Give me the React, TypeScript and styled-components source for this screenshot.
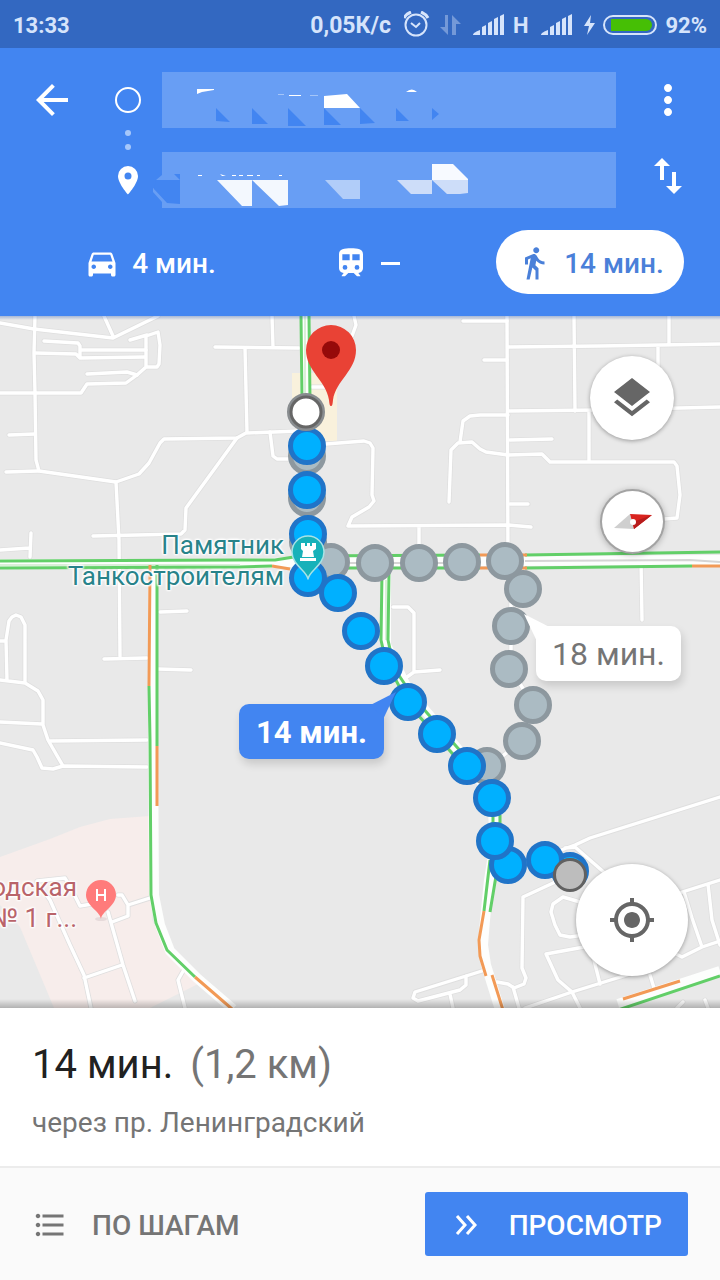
import React from "react";
import styled, { createGlobalStyle } from "styled-components";
import {
  MdArrowBack,
  MdDirectionsCar,
  MdDirectionsWalk,
  MdFormatListBulleted,
  MdImportExport,
  MdLayers,
  MdMoreVert,
  MdMyLocation,
} from "react-icons/md";

const color = {
  status: "#3368c1",
  statusText: "#d6e4fb",
  brand: "#4285f1",
  field: "#689ef4",
  land: "#e9e9e9",
  ink: "#212121",
  muted: "#757575",
};

const GlobalStyle = createGlobalStyle`
  * { box-sizing: border-box; }
  body { margin: 0; background: #fff; font-family: Roboto, "Noto Sans", sans-serif; }
  button, input { font: inherit; border: 0; margin: 0; padding: 0; background: none; color: inherit; }
  button { cursor: pointer; }
  svg { display: block; flex: none; }
`;

const Screen = styled.div`
  display: flex;
  flex-direction: column;
  min-height: 100vh;
  overflow: hidden;
`;

/* Status bar */
const StatusBar = styled.div`
  display: flex;
  align-items: center;
  justify-content: space-between;
  height: 48px;
  padding: 2px 13px 0;
  background: ${color.status};
  color: ${color.statusText};
  font-size: 22px;
  font-weight: 700;
`;

const StatusGroup = styled.div`
  display: flex;
  align-items: center;
  gap: 8px;
`;

const Speed = styled.span`
  font-size: 23px;
  margin-right: 5px;
`;

const Network = styled.span`
  padding-right: 5px;
`;

/* Directions header */
const Header = styled.header`
  padding: 24px 0 22px;
  background: ${color.brand};
  color: #fff;
`;

const Directions = styled.div`
  display: grid;
  grid-template-columns: 104px 58px 1fr 104px;
  grid-template-rows: 56px 56px;
  row-gap: 24px;
`;

const IconButton = styled.button<{ $column: number; $row: number }>`
  grid-column: ${(p) => p.$column};
  grid-row: ${(p) => p.$row};
  display: flex;
  align-items: center;
  justify-content: center;
`;

const SwapButton = styled(IconButton)`
  padding-bottom: 8px;
`;

const Rail = styled.div`
  grid-column: 2;
  grid-row: 1 / span 2;
`;

const Field = styled.div<{ $row: number }>`
  grid-column: 3;
  grid-row: ${(p) => p.$row};
  position: relative;
  background: ${color.field};
`;

const FieldInput = styled.input`
  width: 100%;
  height: 100%;
  padding: 0 20px;
  outline: none;
`;

const FieldArt = styled.svg`
  position: absolute;
  inset: 0;
  overflow: visible;
  pointer-events: none;
`;

const Modes = styled.nav`
  display: flex;
  gap: 28px;
  margin-top: 22px;
  padding: 0 36px 0 56px;
`;

const Mode = styled.button<{ $active?: boolean }>`
  display: flex;
  align-items: center;
  justify-content: center;
  gap: 12px;
  width: 188px;
  height: 64px;
  padding-top: 2px;
  margin-left: ${(p) => (p.$active ? "auto" : "0")};
  border-radius: 32px;
  font-size: 28px;
  font-weight: 500;
  background: ${(p) => (p.$active ? "#fff" : "transparent")};
  color: ${(p) => (p.$active ? "#4a80d9" : "#fff")};
`;

const Dash = styled.span`
  width: 19px;
  height: 3px;
  background: currentColor;
`;

/* Map */
const MapPanel = styled.main`
  position: relative;
  flex: 1;
  min-height: 692px;
  overflow: hidden;
  background: ${color.land};
  &::after {
    content: "";
    position: absolute;
    inset: 0;
    pointer-events: none;
    background:
      linear-gradient(rgba(40, 90, 180, 0.35), transparent) top / 100% 4px no-repeat,
      linear-gradient(transparent, rgba(0, 0, 0, 0.24)) bottom / 100% 9px no-repeat;
  }
`;

const MapCanvas = styled.svg`
  position: absolute;
  inset: 0;
  width: 100%;
  height: 100%;
`;

const MapLabel = styled.div<{ $x: number; $y: number; $w: number; $tone: string }>`
  position: absolute;
  left: ${(p) => p.$x}px;
  top: ${(p) => p.$y}px;
  width: ${(p) => p.$w}px;
  display: flex;
  flex-direction: column;
  align-items: flex-end;
  font-size: 26px;
  line-height: 31px;
  white-space: nowrap;
  color: ${(p) => p.$tone};
  text-shadow: 0 0 2px #fff, 1px 1px 2px #fff, -1px -1px 2px #fff, 1px -1px 2px #fff, -1px 1px 2px #fff;
`;

const Callout = styled.button<{ $x: number; $y: number; $active?: boolean }>`
  position: absolute;
  left: ${(p) => p.$x}px;
  top: ${(p) => p.$y}px;
  width: 145px;
  height: 55px;
  padding-top: 1px;
  border-radius: 10px;
  font-size: ${(p) => (p.$active ? 31 : 32)}px;
  font-weight: ${(p) => (p.$active ? 700 : 400)};
  background: ${(p) => (p.$active ? color.brand : "#fff")};
  color: ${(p) => (p.$active ? "#fff" : color.muted)};
  box-shadow: 2px 5px 8px rgba(0, 0, 0, 0.14);
  &::before {
    content: "";
    position: absolute;
    top: -12px;
    width: 26px;
    height: 30px;
    ${(p) => (p.$active ? "right: -12px;" : "left: -12px;")}
    background: inherit;
    clip-path: ${(p) =>
      p.$active ? "polygon(100% 0, 0 44%, 54% 84%)" : "polygon(0 0, 100% 44%, 46% 84%)"};
  }
`;

const MapButton = styled.button<{ $size: number }>`
  position: absolute;
  display: flex;
  align-items: center;
  justify-content: center;
  width: ${(p) => p.$size}px;
  height: ${(p) => p.$size}px;
  border-radius: 50%;
  background: #fff;
  color: #666;
  box-shadow: 0 1px 4px rgba(0, 0, 0, 0.35);
`;

const LayersButton = styled(MapButton)`
  top: 40px;
  right: 46px;
`;

const CompassButton = styled(MapButton)`
  top: 175px;
  right: 57px;
  box-shadow: 0 0 0 2px #a3a3a3, 0 1px 6px 2px rgba(0, 0, 0, 0.25);
`;

const LocateButton = styled(MapButton)`
  right: 32px;
  bottom: 32px;
`;

/* Bottom sheet */
const Summary = styled.section`
  padding: 32px 32px 25px;
  border-bottom: 2px solid #ececec;
`;

const Headline = styled.h1`
  display: flex;
  gap: 17px;
  margin: 0;
  font-size: 40px;
  line-height: 50px;
  font-weight: 400;
  color: ${color.ink};
`;

const Distance = styled.span`
  color: ${color.muted};
`;

const Via = styled.p`
  margin: 15px 0 0;
  font-size: 28px;
  line-height: 36px;
  color: ${color.muted};
`;

const Actions = styled.footer`
  display: flex;
  align-items: center;
  justify-content: space-between;
  height: 112px;
  padding: 0 32px;
  background: #fafafa;
`;

const Action = styled.button`
  display: flex;
  align-items: center;
  gap: 24px;
  height: 64px;
  padding-top: 2px;
  font-size: 28px;
  font-weight: 500;
  color: ${color.muted};
`;

const PrimaryAction = styled(Action)`
  gap: 28px;
  padding: 2px 26px 0;
  border-radius: 3px;
  background: ${color.brand};
  color: #fff;
`;

const Signal = () => (
  <svg width="32" height="22" viewBox="0 0 32 22" fill="currentColor" aria-hidden="true">
    <path d="M0 21c0-2 4-4 7-5v5zM9 13l4-2v10H9zM15 9l4-2v14h-4zM21 5l4-2v18h-4zM27 2l4-2v21h-4z" />
  </svg>
);

const minorRoads = [
  "M0 323 34 329 113 338 158 316M104 316 113 336",
  "M35 316 34 353 35 393 36 460 39 471 116 482 139 474 149 463 160 443 164 439 237 438 246 433 300 431",
  "M0 393H81L87 384 126 383 137 375 146 367 146 351 146 336 158 332 160 345 159 364 157 367H146M130 340 147 335",
  "M44 341 78 343 80 346V357M35 353 76 354 80 358 145 357M80 350H146M87 374 127 372 137 375",
  "M215 347 299 348M9 435 35 434M6 472 38 471M237 438 186 508 185 530 181 534 93 536",
  "M116 482 119 540 120 656M31 533 30 557M0 550 29 548M104 659 147 658M160 612 187 611M158 669 191 670",
  "M272 316 273 347M245 348 247 432M270 432 273 456 277 459H300M354 316 356 325 352 336M312 387H326",
  "M326 444 364 441 370 443 373 448 372 495 374 501 369 507 352 517 348 526 508 525 531 527M419 526V560",
  "M463 321H507M449 502 451 450 458 443 472 442 480 449 486 452 508 455 542 454 550 462H674L677 466 680 495 677 518 664 519",
  "M460 442 463 421 470 416 480 415H508M507 316 508 560M507 347 600 346 720 344M574 316 575 411M669 316V343M658 347V372",
  "M484 360H507M508 411 600 410 720 407M589 411V461M510 440 552 439M510 504H528",
  "M0 641H6M7 680 6 640 9 621 12 617 16 615 21 617 25 625V683M0 680 25 683 38 691 43 700V725L48 740 63 766M0 722 42 724",
  "M0 743 33 750 37 757 42 768 53 769 63 766 147 767M50 741 147 740",
  "M641 560 642 620M393 607H408L414 613V672L400 682M414 672 440 670M511 600V669L533 705 522 741 487 768",
  "M545 856 575 845 590 838 720 797M565 848 575 847 606 874M560 880 551 884 523 897 522 968 526 978 524 984 514 988 508 984 497 982M513 987 519 1008",
  "M482 971 415 992 413 998 418 1001 460 990 466 985V976M450 994 453 1008",
  "M580 902 563 897 553 904 551 912 555 925 560 935 570 937 584 935M584 947 546 954 558 980 572 992 525 1008M572 992 580 1008M572 992 630 974M594 960 600 984",
  "M650 975 654 988M676 894 720 880M708 884 712 920 720 945M684 892 692 918 702 947 682 957 674 953M702 947 720 941M677 1008 683 1002M705 1000 708 1008",
  "M37 881 65 878 72 890 80 906 92 904M37 882 50 900 70 945 84 975 91 1008M84 978 122 965M108 912 123 965 135 1001M112 922 128 916V905L122 895H118M128 905 150 898M186 966 178 980 185 1008",
];

const majorRoads = [
  "M0 564H240L300 562 720 560",
  "M153 566V740L154 895 160 925 170 951 197 978 233 1009",
  "M386 566V645L408 690 467 760 492 798 495 842 489 880 485 920 483 945 486 965 500 1010",
  "M305 316V412",
  "M618 1004 720 971",
];

const greenTraffic = [
  "M301 316 302 400M309 316 310 400",
  "M0 561 240 560 275 560 300 556 480 555M0 568 240 567 272 566M320 568 480 568M525 555 720 552M525 568 692 566",
  "M157 565V746M149 686 150 740 151 895 156 923 167 950 195 977",
  "M382 572 381 640 386 662 410 706 467 770M389 572 388 640 394 668 414 698 470 762",
  "M493 815V830M500 815V830M490 860 484 911M497 870 490 912M618 1010 720 976",
];

const orangeTraffic = [
  "M150 565 149 686M157 746V806M272 566 290 569M480 555H527M480 568H527M692 566 720 566",
  "M195 977 232 1009M484 911 479 940 480 956 486 976M492 975 503 1010M623 999 680 981",
];

const alternateDots = [
  [307, 456], [307, 498], [308, 542], [331, 562], [487, 766], [375, 563], [419, 563], [462, 562],
  [523, 589], [505, 561], [511, 626], [509, 669], [522, 741], [533, 705],
];

const routeDots = [
  [307, 446], [307, 490], [308, 534], [308, 578], [338, 593], [361, 631], [384, 666], [408, 702],
  [437, 734], [467, 766], [492, 798], [508, 865], [495, 841], [570, 871], [545, 860],
];

const MapDrawing = () => (
  <MapCanvas role="img" aria-label="Карта маршрута">
    <g transform="translate(0 -316)" fill="none" strokeLinejoin="round">
      <path
        d="M0 857 50 839 80 827 110 819 150 816 152 920 170 955 200 983 150 1008H54L20 927 0 905z"
        fill="#f7edeb"
      />
      <path d="M292 373h30v14h15v54h-17l-20-30h-8z" fill="#f9f1dc" />
      {["#dfdfdf", "#fff"].map((stroke, i) => (
        <g key={stroke} stroke={stroke} strokeLinecap="round" strokeWidth={i ? 3.4 : 5}>
          {minorRoads.map((d) => <path key={d} d={d} />)}
        </g>
      ))}
      <g stroke="#fdfefd" strokeWidth="10">
        {majorRoads.map((d) => <path key={d} d={d} />)}
      </g>
      <path d="M320 563H480M525 561 690 560 720 562" stroke="#d5d5d5" strokeWidth="2" />
      <path d="M305 316V400M0 565H240M386 580V640" stroke="#d9f0d8" strokeWidth="2" />
      <g stroke="#62cf68" strokeWidth="3">
        {greenTraffic.map((d) => <path key={d} d={d} />)}
      </g>
      <g stroke="#f29a56" strokeWidth="3">
        {orangeTraffic.map((d) => <path key={d} d={d} />)}
      </g>
      <g fill="#abbbc3" stroke="#8d989f" strokeWidth="5">
        {alternateDots.map(([x, y]) => <circle key={`${x}-${y}`} cx={x} cy={y} r="16.5" />)}
      </g>
      <g fill="#00b0ff" stroke="#2074c8" strokeWidth="5">
        {routeDots.map(([x, y]) => <circle key={`${x}-${y}`} cx={x} cy={y} r="16.5" />)}
      </g>
      <circle cx="306" cy="412" r="17" fill="#fff" stroke="#898d90" strokeWidth="4" />
      <circle cx="306" cy="412" r="15" fill="#fff" stroke="#666" strokeWidth="3" />
      <circle cx="570" cy="875" r="15.5" fill="#bdbdbd" stroke="#616161" strokeWidth="3" />
      <path
        d="M331 406c-1.500 0-1.500-2-2-6-3-20-23-29-23-50a25 25 0 0 1 50 0c0 21-20 30-23 50-.5 4-.5 6-2 6z"
        fill="#e94235"
      />
      <circle cx="331" cy="350" r="9" fill="#960a0a" />
      <path
        d="M308 579c-1-8-16-14-16-27a16 16 0 0 1 32 0c0 13-15 19-16 27z"
        fill="#17b1b9"
        stroke="#a8e3e6"
        strokeWidth="1.500"
      />
      <path
        d="M301 543h4v3h2v-3h3v3h2v-3h4v6l-3 2 1 6h-12l1-6-2-2zM300 558h16v3h-16z"
        fill="#fff"
      />
      <ellipse cx="101" cy="919" rx="6" ry="2" fill="#e6dada" />
      <path d="M101 919c-1-8-15-13-15-24a15 15 0 0 1 30 0c0 11-14 16-15 24z" fill="#ff7b7b" />
      <path d="M97 889v12M105 889v12M97 895h8" stroke="#fff" strokeWidth="2" />
    </g>
  </MapCanvas>
);

export default function App() {
  return (
    <>
      <GlobalStyle />
      <Screen>
        <StatusBar>
          <span>13:33</span>
          <StatusGroup>
            <Speed>0,05К/с</Speed>
            <svg width="28" height="28" viewBox="0 0 28 28" fill="none" stroke="currentColor" strokeWidth="2" aria-hidden="true">
              <circle cx="12" cy="14" r="10.500" />
              <path d="m7 12 5 4 4-4" />
              <path d="M0 7Q2 3 7 1M17 1q5 2 7 6" strokeWidth="3" />
            </svg>
            <svg width="25" height="22" viewBox="0 0 25 22" fill="currentColor" opacity="0.4" aria-hidden="true">
              <path d="M5 1h3v20L0 13h5zM12 1l9 9h-5v11h-4z" />
            </svg>
            <Signal />
            <Network>H</Network>
            <Signal />
            <svg width="14" height="24" viewBox="0 0 14 24" fill="currentColor" aria-hidden="true">
              <path d="M10 2 3 13h5L6 22l8-12H9z" />
            </svg>
            <svg width="54" height="22" viewBox="0 0 54 22" aria-hidden="true">
              <rect x="1" y="2" width="52" height="18" rx="9" fill="none" stroke="currentColor" strokeWidth="2" />
              <path d="M8 5h35a6 6 0 0 1 0 12H8z" fill="#46bf05" />
            </svg>
            <span>92%</span>
          </StatusGroup>
        </StatusBar>

        <Header>
          <Directions>
            <IconButton $column={1} $row={1} aria-label="Назад">
              <MdArrowBack size={48} />
            </IconButton>
            <Rail>
              <svg width="48" height="136" viewBox="0 0 48 136" aria-hidden="true">
                <circle cx="24" cy="28" r="12" fill="none" stroke="#fff" strokeWidth="2" />
                <circle cx="24" cy="61" r="3" fill="#a6c7fa" />
                <circle cx="24" cy="75" r="3" fill="#a6c7fa" />
                <path
                  d="M24 94a10 10 0 0 0-10 10c0 7.500 10 18.500 10 18.500S34 111.500 34 104a10 10 0 0 0-10-10zm0 13.500a3.500 3.500 0 1 1 0-7 3.500 3.500 0 0 1 0 7z"
                  fill="#fff"
                />
              </svg>
            </Rail>
            <Field $row={1}>
              <FieldInput aria-label="Откуда" readOnly />
              <FieldArt width="454" height="56" viewBox="0 0 454 56" aria-hidden="true">
                <g fill="#fff">
                  <path d="M35 17H52v1L40 20l-5 2zM127 23h12v1h-12zM162 24l23-2 13 14h-36zM244 20q6-5 11 0z" />
                  <path d="M148 23h8v1h-8zM116 22h6v1h-6z" opacity="0.4" />
                </g>
                <path
                  d="M54 36v13l14 1zM90 36v16h16zM126 36v18h18zM162 36v17h17zM198 36v16l15-1zM234 36v13h13zM270 36v12l7-6z"
                  fill={color.brand}
                />
              </FieldArt>
            </Field>
            <IconButton $column={4} $row={1} aria-label="Меню">
              <MdMoreVert size={48} />
            </IconButton>
            <Field $row={2}>
              <FieldInput aria-label="Куда" readOnly />
              <FieldArt width="454" height="56" viewBox="0 0 454 56" aria-hidden="true">
                <path d="M-9 36-9 40 0 50 6 52V48zM-6 28 0 23V28z" fill={color.field} />
                <path d="M-6 28H18V52L5 51-8 37zM12 22h6v6z" fill={color.brand} />
                <path d="M36 23h4v1h-4zM58 22l6 2h-4zM70 23h4v1h-4zM77 23h4v1h-4zM85 23h6v1h-6zM95 23h3v1h-3zM117 23h3v1h-3z" fill="#fff" />
                <path d="M55 28H126V53l-9 1L90 28V54H80z" fill="#f3f8fe" />
                <path d="M163 28H198V47H181z" fill="#b1cdf9" />
                <path d="M235 28H306V41L298 42H285L270 28V42H249z" fill="#cdddf9" />
                <path d="M270 12H291L306 27V28H270z" fill="#f7faff" />
              </FieldArt>
            </Field>
            <SwapButton $column={4} $row={2} aria-label="Поменять местами">
              <MdImportExport size={48} />
            </SwapButton>
          </Directions>

          <Modes aria-label="Способ передвижения">
            <Mode>
              <MdDirectionsCar size={36} viewBox="1 0 22 24" />
              4 мин.
            </Mode>
            <Mode aria-label="Поезд">
              <svg width="36" height="32" viewBox="0 0 24 24" fill="currentColor" aria-hidden="true">
                <path
                  fillRule="evenodd"
                  d="M12 1c-5 0-9 .5-9 4.500V16c0 2 1.500 3.500 3.500 3.500L5 21.500V22h2.500l2.500-2.500h4l2.500 2.500H19v-.5l-1.500-2c2 0 3.500-1.500 3.500-3.500V5.500C21 1.500 17 1 12 1zM5.500 5.500H11V10H5.500zM13 5.500h5.500V10H13zM7.500 13.500a1.800 1.800 0 1 1 0 3.600 1.800 1.800 0 0 1 0-3.600zm9 0a1.800 1.800 0 1 1 0 3.600 1.800 1.800 0 0 1 0-3.600z"
                />
              </svg>
              <Dash />
            </Mode>
            <Mode $active aria-current="true">
              <MdDirectionsWalk size={36} />
              14 мин.
            </Mode>
          </Modes>
        </Header>

        <MapPanel>
          <MapDrawing />
          <MapLabel $x={64} $y={214} $w={220} $tone="#28838a">
            <span>Памятник</span>
            <span>Танкостроителям</span>
          </MapLabel>
          <MapLabel $x={-43} $y={556} $w={120} $tone="#b9646a">
            <span>одская</span>
            <span>№ 1 г...</span>
          </MapLabel>
          <Callout $x={536} $y={310}>18 мин.</Callout>
          <Callout $x={239} $y={388} $active>14 мин.</Callout>
          <LayersButton $size={84} aria-label="Слои">
            <MdLayers size={48} />
          </LayersButton>
          <CompassButton $size={61} aria-label="Компас">
            <svg width="40" height="20" viewBox="0 0 40 20" aria-hidden="true">
              <path d="M1 16 17 2l4 15z" fill="#cfcfcf" />
              <path d="M17 2 39 3 21 17z" fill="#d9241f" />
              <path d="M39 3 21 17l-1-7z" fill="#b71c1c" />
              <circle cx="20" cy="10" r="3" fill="#fff" />
            </svg>
          </CompassButton>
          <LocateButton $size={112} aria-label="Моё местоположение">
            <MdMyLocation size={48} />
          </LocateButton>
        </MapPanel>

        <Summary>
          <Headline>
            <span>14 мин.</span>
            <Distance>(1,2 км)</Distance>
          </Headline>
          <Via>через пр. Ленинградский</Via>
        </Summary>
        <Actions>
          <Action>
            <MdFormatListBulleted size={36} />
            ПО ШАГАМ
          </Action>
          <PrimaryAction>
            <svg width="30" height="24" viewBox="0 0 30 24" fill="none" stroke="currentColor" strokeWidth="3" aria-hidden="true">
              <path d="m6 3 8 9-8 9M16 3l8 9-8 9" />
            </svg>
            ПРОСМОТР
          </PrimaryAction>
        </Actions>
      </Screen>
    </>
  );
}
